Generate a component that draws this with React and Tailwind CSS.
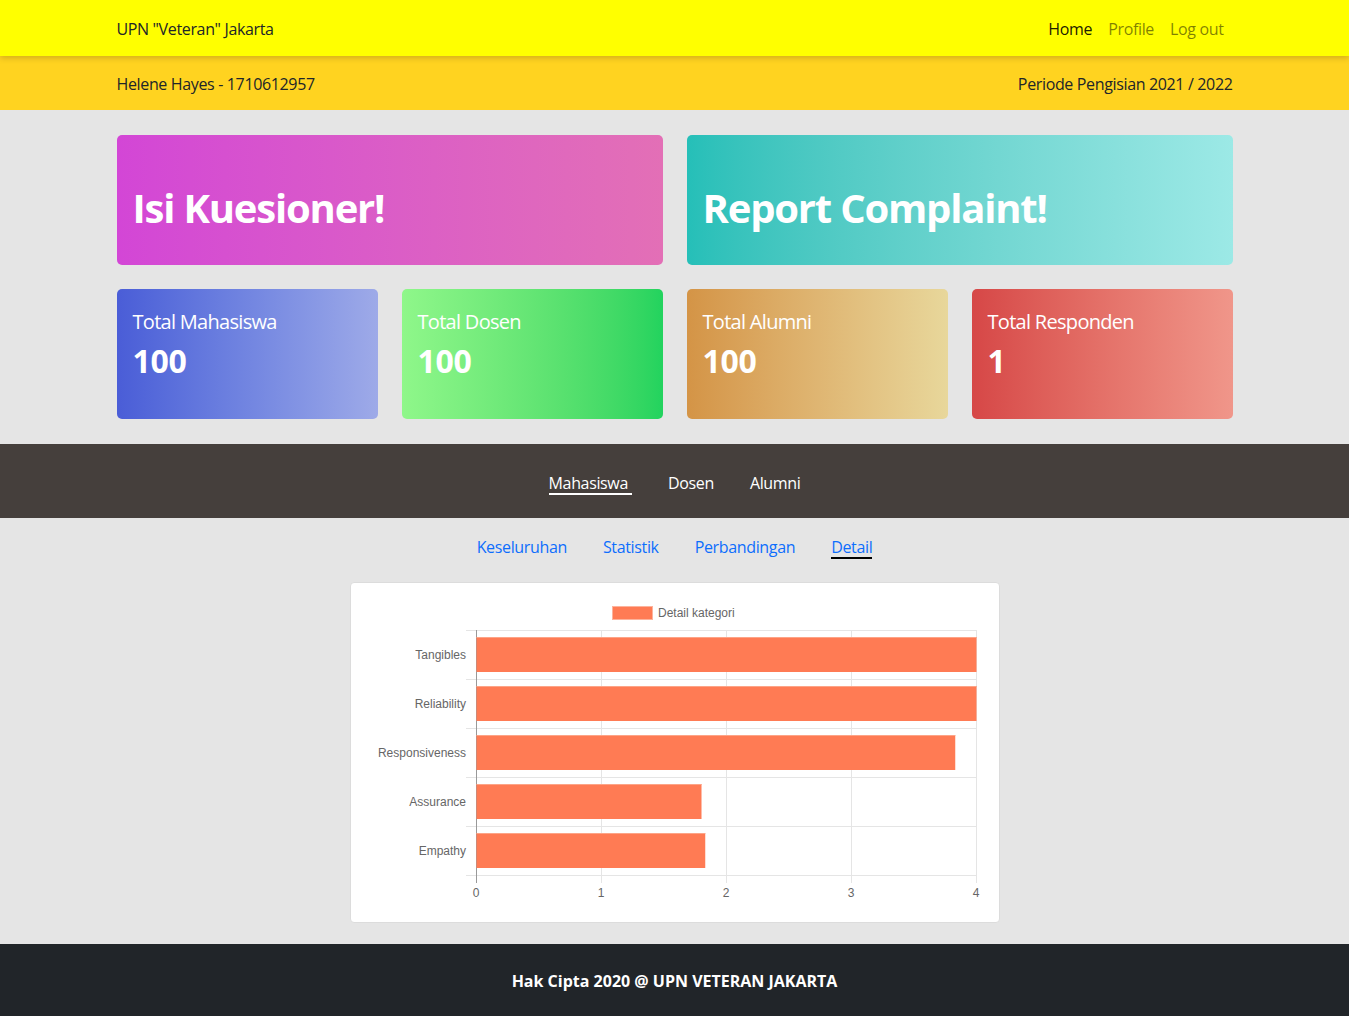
import React from "react";

const font = { fontFamily: '"Open Sans", "Noto Sans", sans-serif' };

const bars = [
  { label: "Tangibles", value: 4 },
  { label: "Reliability", value: 4 },
  { label: "Responsiveness", value: 3.83 },
  { label: "Assurance", value: 1.8 },
  { label: "Empathy", value: 1.83 },
];

function DetailChart() {
  const x0 = 125;
  const step = 125;
  const gridTop = 47;
  const row = 49;
  return (
    <svg width="648" height="339" viewBox="0 0 648 339" style={{ fontFamily: '"Liberation Sans", Arial, sans-serif', letterSpacing: 0 }}>
      {/* legend */}
      <rect x="261.5" y="23.5" width="40" height="13" fill="#ff7b54" stroke="#fdb39c" />
      <text x="307" y="34" fontSize="12" fill="#666">Detail kategori</text>

      {/* horizontal grid + left ticks */}
      {[0, 1, 2, 3, 4, 5].map((i) => (
        <line key={"h" + i} x1={x0 - 10} x2={x0 + step * 4} y1={gridTop + row * i + 0.5} y2={gridTop + row * i + 0.5} stroke="#e5e5e5" />
      ))}
      {/* vertical grid */}
      {[0, 1, 2, 3, 4].map((i) => (
        <line key={"v" + i} x1={x0 + step * i + 0.5} x2={x0 + step * i + 0.5} y1={gridTop} y2={gridTop + row * 5 + 8} stroke={i === 0 ? "#999" : "#e5e5e5"} />
      ))}

      {bars.map((b, i) => {
        const y = gridTop + row * i + 7;
        return (
          <g key={b.label}>
            <rect x={x0 + 0.5} y={y} width={b.value * step} height="35" fill="#ff7b54" />
            <rect x={x0 + 0.5} y={y} width={b.value * step} height="1" fill="#fda487" />
            <text x={x0 - 10} y={y + 21.5} fontSize="12" fill="#666" textAnchor="end">{b.label}</text>
          </g>
        );
      })}

      {[0, 1, 2, 3, 4].map((i) => (
        <text key={"t" + i} x={x0 + step * i} y="314" fontSize="12" fill="#666" textAnchor="middle">{i}</text>
      ))}
    </svg>
  );
}

function StatCard({ title, value, gradient }) {
  return (
    <div className={`h-[130px] rounded-[5px] px-4 pt-[21px] text-white ${gradient}`}>
      <p className="text-[20px] leading-6 tracking-[-0.7px]">{title}</p>
      <p className="mt-[8px] text-[32px] leading-[38px] font-bold">{value}</p>
    </div>
  );
}

export default function App() {
  return (
    <div className="min-h-screen bg-[#e5e5e5] text-[#212529] tracking-[-0.35px]" style={font}>
      {/* Navbar */}
      <nav className="relative z-10 bg-[#ffff00] shadow-[0_2px_6px_rgba(0,0,0,0.18)]">
        <div className="mx-auto flex h-14 max-w-[1116px] items-center justify-between pt-[2px]">
          <span className="text-[16px]">UPN "Veteran" Jakarta</span>
          <div className="mr-[9px] flex items-center gap-4 text-[16px]">
            <a className="text-[rgba(0,0,0,0.9)]">Home</a>
            <a className="text-[rgba(0,0,0,0.5)]">Profile</a>
            <a className="text-[rgba(0,0,0,0.5)]">Log out</a>
          </div>
        </div>
      </nav>

      {/* Info bar */}
      <div className="bg-[#ffd320]">
        <div className="mx-auto flex h-[54px] max-w-[1116px] items-center justify-between pt-[2px] text-[16px]">
          <span>Helene Hayes - 1710612957</span>
          <span>Periode Pengisian 2021 / 2022</span>
        </div>
      </div>

      {/* Cards */}
      <div className="mx-auto max-w-[1116px] pt-[25px] pb-[25px]">
        <div className="grid grid-cols-2 gap-6">
          <div className="flex h-[130px] items-center rounded-[5px] bg-gradient-to-r from-[#d346d6] to-[#e36fb6] px-4 pt-4">
            <h1 className="text-[40px] font-bold tracking-[-1.2px] text-white">Isi Kuesioner!</h1>
          </div>
          <div className="flex h-[130px] items-center rounded-[5px] bg-gradient-to-r from-[#25bfb8] to-[#9ce9e6] px-4 pt-4">
            <h1 className="text-[40px] font-bold tracking-[-1.2px] text-white">Report Complaint!</h1>
          </div>
        </div>
        <div className="mt-6 grid grid-cols-4 gap-6">
          <StatCard title="Total Mahasiswa" value="100" gradient="bg-gradient-to-r from-[#4a5dd7] to-[#9eaae8]" />
          <StatCard title="Total Dosen" value="100" gradient="bg-gradient-to-r from-[#8ff78a] to-[#22d35e]" />
          <StatCard title="Total Alumni" value="100" gradient="bg-gradient-to-r from-[#d49446] to-[#e8d79b]" />
          <StatCard title="Total Responden" value="1" gradient="bg-gradient-to-r from-[#d64747] to-[#f0968a]" />
        </div>
      </div>

      {/* Role tabs */}
      <div className="flex h-[74px] items-center justify-center gap-9 bg-[#453f3c] pt-[5px] text-[16px] text-white">
        <a className="border-b-2 border-white pr-[4px] leading-5">Mahasiswa</a>
        <a className="border-b-2 border-transparent leading-5">Dosen</a>
        <a className="border-b-2 border-transparent leading-5">Alumni</a>
      </div>

      {/* Sub tabs */}
      <div className="flex justify-center gap-9 pt-[19px] text-[16px] text-[#0d6efd]">
        <a className="border-b-2 border-transparent leading-5">Keseluruhan</a>
        <a className="border-b-2 border-transparent leading-5">Statistik</a>
        <a className="border-b-2 border-transparent leading-5">Perbandingan</a>
        <a className="border-b-2 border-black leading-5">Detail</a>
      </div>

      {/* Chart */}
      <div className="flex justify-center pt-[23px] pb-[21px]">
        <div className="h-[341px] w-[650px] rounded-[4px] border border-[#dcdcdc] bg-white tracking-normal">
          <DetailChart />
        </div>
      </div>

      {/* Footer */}
      <footer className="flex h-[72px] items-center justify-center bg-[#212529] pt-[2px]">
        <p className="text-[16px] font-bold tracking-normal text-white">Hak Cipta 2020 @ UPN VETERAN JAKARTA</p>
      </footer>
    </div>
  );
}
